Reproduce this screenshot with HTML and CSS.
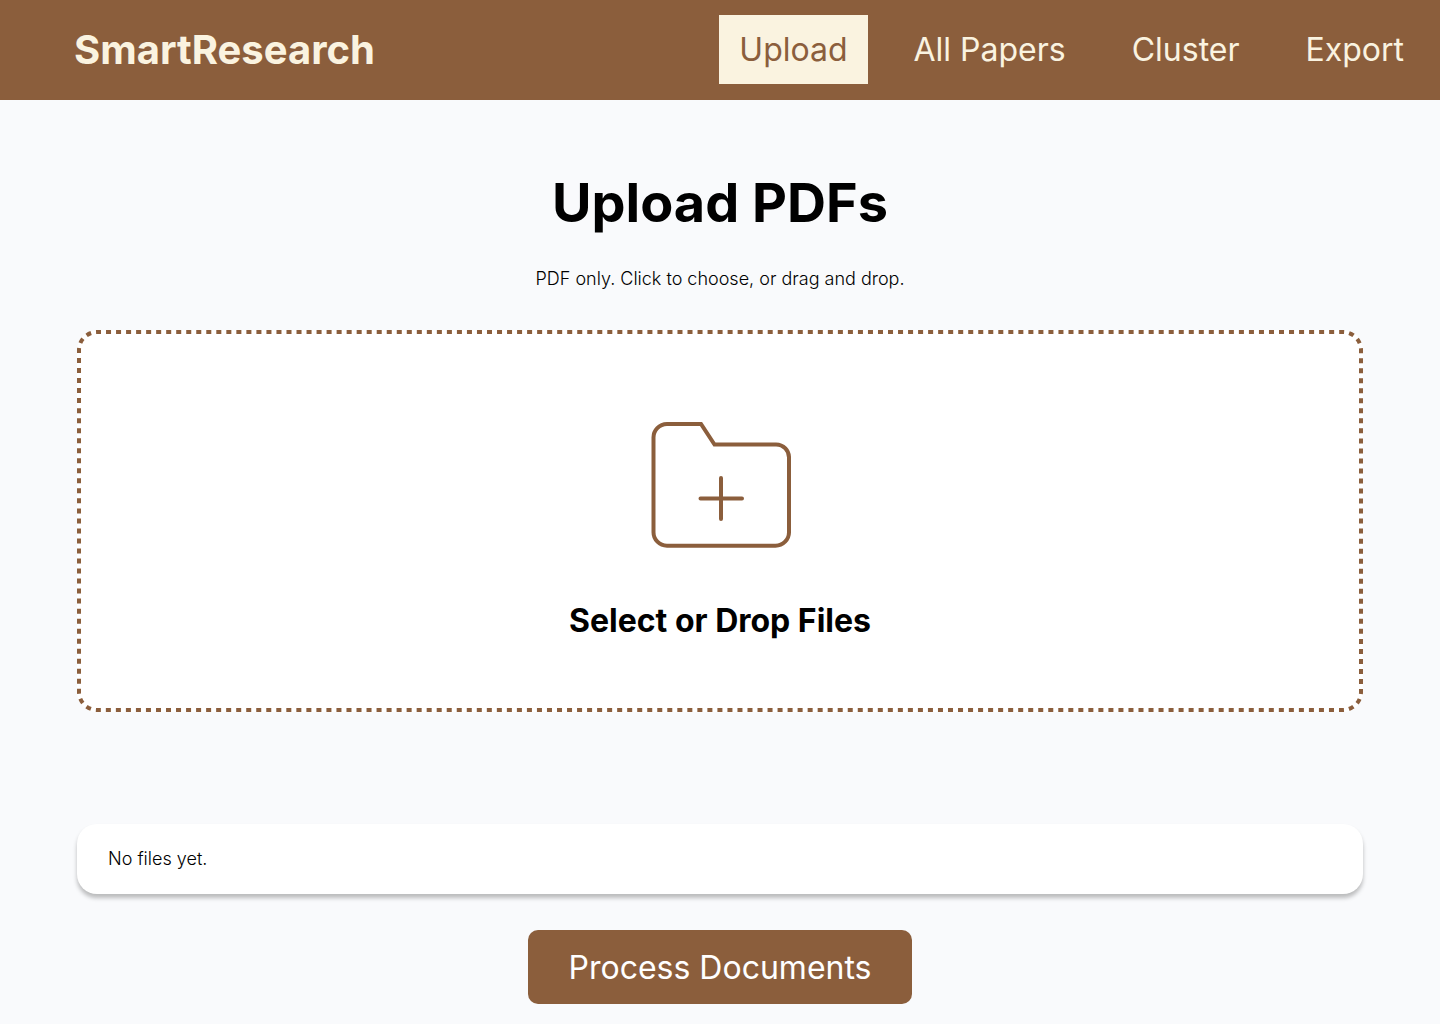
FILE: index.html
```html
<!DOCTYPE html>
<html lang="en">
<head>
  <meta charset="utf-8">
  <meta name="viewport" content="width=device-width, initial-scale=1">
  <title>SmartResearch – Upload PDFs</title>
  <link rel="stylesheet" href="styles.css">
</head>
<body>
  <header class="site-header">
    <a class="brand" href="#">SmartResearch</a>
    <nav class="site-nav">
      <a class="nav-link nav-link-active" href="#upload" aria-current="page">Upload</a>
      <a class="nav-link" href="#papers">All Papers</a>
      <a class="nav-link" href="#cluster">Cluster</a>
      <a class="nav-link" href="#export">Export</a>
    </nav>
  </header>

  <main class="page">
    <h1 class="title">Upload PDFs</h1>
    <p class="subtitle">PDF only. Click to choose, or drag and drop.</p>

    <label class="dropzone" for="files">
      <svg class="dropzone-outline" aria-hidden="true">
        <rect class="dropzone-dashes" x="2" y="2" rx="18" ry="18" pathLength="3280"/>
      </svg>
      <input class="file-input" type="file" id="files" accept="application/pdf" multiple>
      <svg class="folder-icon" viewBox="-2 0 142 128" aria-hidden="true">
        <path d="M16 3H50L63.500 23.500H125A13 13 0 0 1 138 37V111A13.500 13.500 0 0 1 124.500 124.700H16A13.500 13.500 0 0 1 2.500 111V17A13.500 13.500 0 0 1 16 3Z"/>
        <path d="M70 57V98M49.500 77.500H91" stroke-linecap="round"/>
      </svg>
      <span class="dropzone-text">Select or Drop Files</span>
    </label>

    <section class="file-list" aria-label="Selected files">
      <p class="file-empty">No files yet.</p>
    </section>

    <button class="process-button" type="button">Process Documents</button>
  </main>
</body>
</html>
```

FILE: styles.css
```css
* {
  box-sizing: border-box;
}

body {
  margin: 0;
  background: #f9fafc;
  color: #000;
  font-family: Inter, "Liberation Sans", sans-serif;
}

.site-header {
  display: flex;
  align-items: center;
  justify-content: space-between;
  min-height: 100px;
  padding: 0 16px 1px 74px;
  background: #8b5e3c;
}

.brand {
  color: #faf3e0;
  font-size: 40px;
  font-weight: 700;
  line-height: 49px;
  text-decoration: none;
}

.site-nav {
  display: flex;
  gap: 26px;
}

.nav-link {
  padding: 15px 20px;
  color: #faf3e0;
  font-size: 32px;
  font-weight: 400;
  line-height: 39px;
  text-decoration: none;
}

.nav-link-active {
  background: #faf3e0;
  color: #8b5e3c;
}

.page {
  display: flex;
  flex-direction: column;
  align-items: center;
  padding: 69px 77px 20px;
}

.title {
  margin: 0;
  font-size: 54px;
  font-weight: 700;
  line-height: 68px;
}

.subtitle {
  margin: 31px 0 40px;
  font-size: 18px;
  font-weight: 300;
  line-height: 22px;
}

.dropzone {
  position: relative;
  display: flex;
  flex-direction: column;
  align-items: center;
  align-self: stretch;
  padding: 91px 20px 71px;
  border-radius: 20px;
  background: #fff;
  cursor: pointer;
}

.dropzone-outline {
  position: absolute;
  inset: 0;
  width: 100%;
  height: 100%;
}

.dropzone-dashes {
  width: calc(100% - 4px);
  height: calc(100% - 4px);
  fill: none;
  stroke: #8b5e3c;
  stroke-width: 4px;
  stroke-dasharray: 5 5;
  stroke-dashoffset: 1px;
}

.file-input {
  position: absolute;
  inset: 0;
  width: 100%;
  height: 100%;
  opacity: 0;
  cursor: pointer;
}

.folder-icon {
  width: 142px;
  height: 128px;
  fill: none;
  stroke: #8b5e3c;
  stroke-width: 4px;
}

.dropzone-text {
  margin-top: 52px;
  font-size: 32px;
  font-weight: 700;
  line-height: 40px;
}

.file-list {
  align-self: stretch;
  margin: 112px 0 36px;
  padding: 24px 31px;
  border-radius: 20px;
  background: #fff;
  box-shadow: 0 4px 4px rgba(0, 0, 0, 0.25);
}

.file-empty {
  margin: 0;
  font-size: 18px;
  font-weight: 300;
  line-height: 22px;
}

.process-button {
  padding: 18px 41px 16px;
  border: 0;
  border-radius: 10px;
  background: #8b5e3c;
  color: #fff;
  font-family: inherit;
  font-size: 32px;
  font-weight: 400;
  line-height: 40px;
}
```
